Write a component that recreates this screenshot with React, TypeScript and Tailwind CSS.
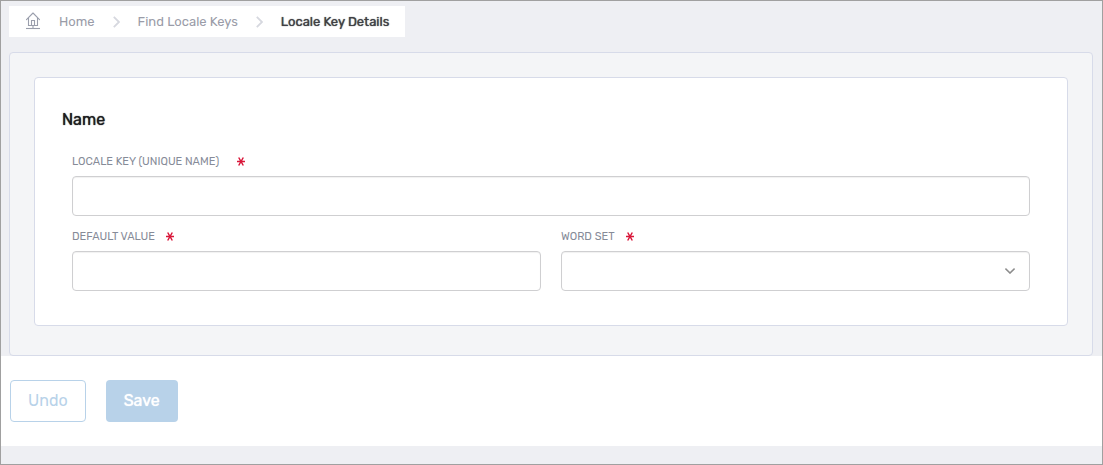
import React, { useState } from "react";

function HomeIcon() {
  return (
    <svg className="h-[19px] w-[14px] shrink-0" viewBox="0 0 14 19" fill="none" stroke="#9a9eac" strokeWidth="1.1" aria-hidden="true">
      <path d="M0.5 7.6 L7 1 L13.5 7.6" strokeLinejoin="round" strokeLinecap="round" />
      <path d="M2.5 6 V13.5 H11.5 V6" />
      <path d="M5.5 13.5 V8.5 H8.5 V13.5" />
      <path d="M7 13.5 V16" />
      <path d="M0 16.5 H14" />
    </svg>
  );
}

function Separator() {
  return (
    <svg className="h-3 w-[7px] shrink-0" viewBox="0 0 7 12" fill="none" stroke="#d6d8df" strokeWidth="1.8" aria-hidden="true">
      <path d="M0.8 0.8 L6 6 L0.8 11.2" />
    </svg>
  );
}

function RequiredMark() {
  return (
    <svg className="h-[10px] w-2 shrink-0" viewBox="0 0 8 10" fill="none" stroke="#d9183b" strokeWidth="1.5" aria-hidden="true">
      <path d="M0 4.5 H8 M1.7 0.5 L6.3 8.5 M6.3 0.5 L1.7 8.5" />
    </svg>
  );
}

type LabelProps = {
  htmlFor: string;
  text: string;
  wide?: boolean;
};

function FieldLabel({ htmlFor, text, wide }: LabelProps) {
  return (
    <label
      htmlFor={htmlFor}
      className={`flex h-5 items-center text-[11px] leading-5 text-[#868b98] ${wide ? "gap-[18px]" : "gap-[11px]"}`}
    >
      {text}
      <RequiredMark />
    </label>
  );
}

const inputStyle =
  "block h-10 w-full appearance-none rounded border border-[#cfcfd1] bg-white px-3 text-sm text-[#212121] shadow-[inset_0_1px_1px_rgba(0,0,0,0.06)] outline-none focus:border-[#8ab6dc]";

export default function App() {
  const [localeKey, setLocaleKey] = useState("");
  const [defaultValue, setDefaultValue] = useState("");
  const [wordSet, setWordSet] = useState("");

  return (
    <div className="min-h-screen border border-[#a0a0a0] bg-[#eeeff3] font-[Rubik,Roboto,sans-serif]">
      {/* Breadcrumb */}
      <nav aria-label="Breadcrumb" className="flex px-2 pt-[5px]">
        <div className="flex h-[31px] items-center bg-white pr-4 pl-[17px] text-[13px]">
          <HomeIcon />
          <a href="#home" className="ml-[19px] text-[#9a9ca8]">Home</a>
          <span className="mx-[18px]"><Separator /></span>
          <a href="#keys" className="text-[#9a9ca8]">Find Locale Keys</a>
          <span className="mx-[18px]"><Separator /></span>
          <span aria-current="page" className="text-[#3f4044] [text-shadow:0_0_1px_currentColor]">Locale Key Details</span>
        </div>
      </nav>

      {/* Form */}
      <main className="mr-[9px] ml-2 mt-[15px] rounded border border-[#d7dbe9] bg-[#f4f5f7] px-6 pt-6 pb-[29px]">
        <section className="rounded border border-[#d7dbe9] bg-white pt-7 pr-[37px] pb-[34px] pl-[27px]">
          <h1 className="text-base leading-7 text-[#1c1c1e] [text-shadow:0_0_1px_currentColor]">Name</h1>
          <div className="mt-[18px] ml-[10px] grid grid-cols-2 gap-x-5 gap-y-[11px]">
            <div className="col-span-2">
              <FieldLabel htmlFor="localeKey" text="LOCALE KEY (UNIQUE NAME)" wide />
              <input
                id="localeKey"
                className={`mt-1 ${inputStyle}`}
                value={localeKey}
                onChange={(e) => setLocaleKey(e.target.value)}
                required
              />
            </div>
            <div>
              <FieldLabel htmlFor="defaultValue" text="DEFAULT VALUE" />
              <input
                id="defaultValue"
                className={`mt-1 ${inputStyle}`}
                value={defaultValue}
                onChange={(e) => setDefaultValue(e.target.value)}
                required
              />
            </div>
            <div>
              <FieldLabel htmlFor="wordSet" text="WORD SET" />
              <div className="relative mt-1">
                <select
                  id="wordSet"
                  className={inputStyle}
                  value={wordSet}
                  onChange={(e) => setWordSet(e.target.value)}
                  required
                >
                  <option value=""></option>
                </select>
                <svg
                  className="pointer-events-none absolute top-[17px] right-[15px] h-[6px] w-[10px]"
                  viewBox="0 0 10 6"
                  fill="none"
                  stroke="#8c8c8c"
                  strokeWidth="1.6"
                  aria-hidden="true"
                >
                  <path d="M0.4 0.6 L5 5 L9.6 0.6" />
                </svg>
              </div>
            </div>
          </div>
        </section>
      </main>

      {/* Actions */}
      <footer className="flex gap-5 bg-white px-[9px] py-6">
        <button type="button" className="h-[42px] rounded border border-[#b8d2e9] bg-white px-[17px] text-base text-[#b8d2e9]">
          Undo
        </button>
        <button type="button" className="h-[42px] rounded bg-[#b8d2e9] px-[18px] text-base text-white [text-shadow:0_0_1px_currentColor]">
          Save
        </button>
      </footer>
    </div>
  );
}
